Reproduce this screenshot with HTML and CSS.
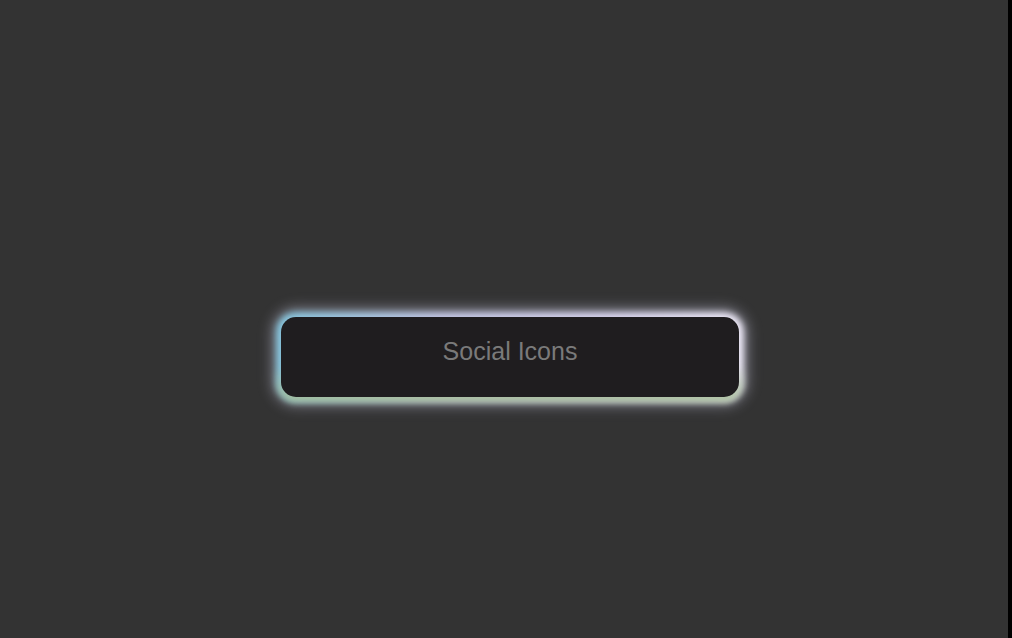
FILE: index.html
```html
<!DOCTYPE html>
<html lang="en">
<head>
<meta charset="utf-8">
<title>Social Icons</title>
<link rel="stylesheet" href="styles.css">
</head>
<body>
<main class="page">
  <div class="card">
    <div class="face">
      <span class="label">Social Icons</span>
    </div>
  </div>
</main>
</body>
</html>
```
FILE: styles.css
```css
html {
  background: #000;
}
body {
  margin: 0;
  font-family: "Liberation Sans", Arial, sans-serif;
}
.page {
  width: 1008px;
  height: 638px;
  box-sizing: border-box;
  background: #333333;
  padding: 317px 0 0 281px;
}
.card {
  position: relative;
  z-index: 0;
  width: 458px;
  height: 80px;
}
.card::before {
  content: "";
  position: absolute;
  inset: -5px;
  border-radius: 20px;
  background: linear-gradient(90deg, #86c6de 0%, #c2c6e4 35%, #d6d2ec 70%, #ece8f6 100%);
  filter: blur(3px);
  box-shadow: 0 0 12px 4px rgba(210, 210, 235, 0.45);
  z-index: -1;
}
.card::after {
  content: "";
  position: absolute;
  inset: -5px;
  border-radius: 20px;
  background: linear-gradient(180deg, rgba(169, 191, 156, 0) 60%, #a7bf98 100%);
  filter: blur(3px);
  z-index: -1;
}
.face {
  height: 100%;
  box-sizing: border-box;
  border-radius: 15px;
  background: #1f1d1f;
  display: flex;
  justify-content: center;
  align-items: center;
  padding-bottom: 12px;
}
.label {
  font-size: 25px;
  color: #7a7a7a;
}
```
